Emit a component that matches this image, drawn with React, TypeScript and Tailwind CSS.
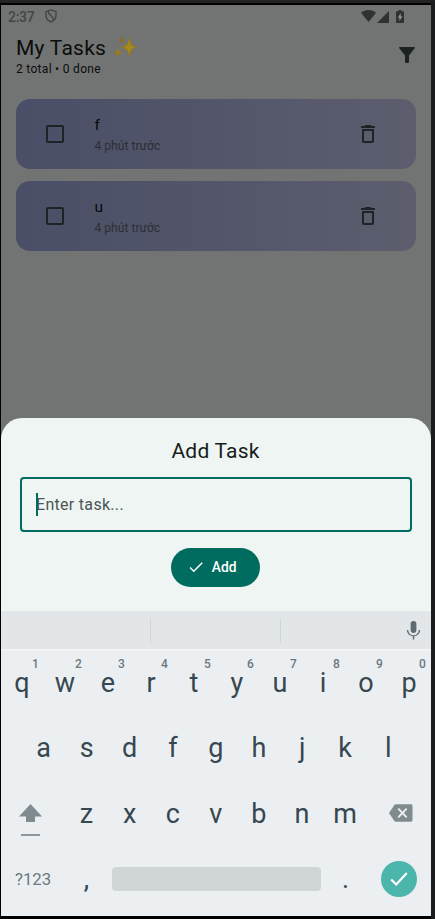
import React from "react";

const TOP_ROW: [string, string][] = [
  ["q", "1"], ["w", "2"], ["e", "3"], ["r", "4"], ["t", "5"],
  ["y", "6"], ["u", "7"], ["i", "8"], ["o", "9"], ["p", "0"],
];
const HOME_ROW = ["a", "s", "d", "f", "g", "h", "j", "k", "l"];
const BOTTOM_ROW = ["z", "x", "c", "v", "b", "n", "m"];

function StatusBar() {
  return (
    <div className="flex h-6 items-center pl-[7px] pr-[27px] text-[#444645]">
      <span className="w-[27px] text-[14px] leading-none font-medium tracking-[-0.3px]">2:37</span>
      <svg className="ml-[10px] mt-[-2px] h-[14px] w-3" viewBox="0 0 12 14" fill="none" stroke="#404241" strokeWidth="1.3">
        <path d="M6 .9 11 2.700v3.900c0 2.900-2.100 5.200-5 6.200-2.900-1-5-3.300-5-6.200V2.700z" />
        <path d="M3.200 2.200c-.2 4.300 5.300 4 5.300 8.800" />
      </svg>
      <div className="ml-auto flex items-center text-[#303231]">
        <svg className="mt-[-2px] h-3 w-[15px]" viewBox="0 0 15 12" fill="currentColor">
          <path d="M7.500 12 0 2.800C2 1 4.600 0 7.500 0S13 1 15 2.800z" />
        </svg>
        <svg className="ml-[1px] mt-[-1px] h-3 w-3" viewBox="0 0 12 12" fill="currentColor">
          <path d="M12 0v12H0z" />
        </svg>
        <svg className="ml-[7px] mt-[-2px] h-[13px] w-[8px]" viewBox="0 0 8 13" fill="currentColor">
          <path d="M2.500 0h3v1.200h1.600q.9 0 .9.900v10q0 .9-.9.900H.9q-.9 0-.9-.9V2.100q0-.9.900-.9h1.600z" />
          <path d="M4.700 3 1.700 7.700h1.700v3.500l3-4.900H4.700z" fill="#8b8e8d" />
        </svg>
      </div>
    </div>
  );
}

function Sparkles() {
  return (
    <svg className="h-6 w-6" viewBox="0 0 24 24">
      <path d="M16.200.8c.8 6.800 2.600 9.800 8 11.400-5.400 1.600-7.200 4.600-8 11.200-.8-6.600-2.600-9.600-8-11.200 5.400-1.600 7.200-4.600 8-11.400z" fill="#98781a" />
      <path d="M16.200 4.500c1 4.700 2.200 6.700 5.500 7.700-3.300 1-4.500 3-5.500 7.500-1-4.500-2.200-6.500-5.500-7.500 3.300-1 4.500-3 5.500-7.700z" fill="#a48a22" />
      <path d="M4.900 12.400c.6 3.200 1.700 4.400 4.600 5.200-2.900.8-4 2-4.600 5.200-.6-3.200-1.700-4.400-4.600-5.200 2.900-.8 4-2 4.600-5.200z" fill="#9c7a1c" />
      <path d="M8.500.9c.5 2.600 1.200 3.600 3.300 4.200-2.100.6-2.800 1.600-3.300 4.200C8 6.700 7.300 5.700 5.200 5.100 7.300 4.500 8 3.500 8.500.9z" fill="#94691c" />
    </svg>
  );
}

function TaskCard({ title }: { title: string }) {
  return (
    <div className="flex h-[70.500px] items-center rounded-[14px] bg-linear-to-r from-[#4a4e67] via-[#53566a] to-[#5c5e6e] pl-[27px] pr-[35px]">
      <svg className="size-6" viewBox="0 0 24 24" fill="#1d2423">
        <path d="M19 5v14H5V5zm0-2H5a2 2 0 0 0-2 2v14a2 2 0 0 0 2 2h14a2 2 0 0 0 2-2V5a2 2 0 0 0-2-2" />
      </svg>
      <div className="ml-[27.500px] flex-1 pt-[3px]">
        <p className="text-[15.500px] leading-[22px] tracking-[0.3px] text-[#060808]">{title}</p>
        <p className="text-[12px] leading-[21px] tracking-[0.050px] text-[#2b2f32]">4 phút trước</p>
      </div>
      <svg className="mr-[0.5px] size-6" viewBox="0 0 24 24" fill="#1d2423">
        <path d="M16 9v10H8V9zm-1.500-6h-5l-1 1H5v2h14V4h-3.500zM18 7H6v12c0 1.100.9 2 2 2h8c1.100 0 2-.9 2-2z" />
      </svg>
    </div>
  );
}

function AddTaskSheet() {
  return (
    <section className="flex h-[193px] flex-col items-center rounded-t-[21px] bg-[#eef5f3] pr-[20px] pl-[19px]">
      <h2 className="mt-[19px] text-[21px] leading-[28px] tracking-[0.200px] text-[#171d1b]">Add Task</h2>
      <div className="mt-[12px] flex h-[55px] w-[391.500px] items-center self-start rounded-[4px] border-2 border-[#006b5f] pl-[14px]">
        <span className="h-[23px] w-[1.500px] bg-[#006b5f]" />
        <span className="-ml-[1.500px] text-[16px] leading-none tracking-[0.3px] text-[#4c5553]">Enter task...</span>
      </div>
      <button className="mt-[15.500px] flex h-[39.500px] w-[89.500px] items-center rounded-full bg-[#006b5f] pl-[16px] text-white">
        <svg className="size-[18px]" viewBox="0 0 24 24" fill="currentColor">
          <path d="M9 16.170 4.830 12l-1.420 1.410L9 19 21 7l-1.410-1.410z" />
        </svg>
        <span className="ml-[7px] pt-px text-[13.800px] leading-none font-medium tracking-[0.100px]">Add</span>
      </button>
    </section>
  );
}

function Key({ label, hint }: { label: string; hint?: string }) {
  return (
    <div className="relative flex h-[65px] w-[43.100px] items-center justify-center pr-px text-[27px] leading-none text-[#37474f]">
      {label}
      {hint && <span className="absolute top-[6px] left-[31px] text-[12px] leading-[14px] font-medium text-[#6c787d]">{hint}</span>}
    </div>
  );
}

function Keyboard() {
  return (
    <section className="bg-[#ebeff2]">
      <div className="flex h-[38px] items-center border-t border-[#e4e8e9] bg-[#e2e6e9]">
        <span className="ml-[149px] h-6 w-px bg-[#cfd4d7]" />
        <span className="ml-[129px] h-6 w-px bg-[#cfd4d7]" />
        <svg className="ml-[121px] size-[23px]" viewBox="0 0 24 24" fill="#5f6c72">
          <rect x="9" y="2" width="6" height="12.500" rx="3" />
          <path d="M17.500 11.500a5.500 5.500 0 0 1-11 0H5a7 7 0 0 0 6.200 6.500v3.500h1.600V18a7 7 0 0 0 6.200-6.500z" />
        </svg>
      </div>
      <div className="h-[2px] bg-[#f1f3f5]" />
      <div className="flex h-[65px]">
        {TOP_ROW.map(([label, hint]) => <Key key={label} label={label} hint={hint} />)}
      </div>
      <div className="flex h-[66px] pl-[21.500px]">
        {HOME_ROW.map((label) => <Key key={label} label={label} />)}
      </div>
      <div className="flex h-[65px]">
        <div className="flex w-[64.500px] flex-col items-start pl-[18px] pt-[22px]">
          <svg className="h-[18px] w-[23px]" viewBox="0 0 23 18" fill="#808b8f">
            <path d="M11.500 0 23 12.500h-7V18H7v-5.500H0z" />
          </svg>
          <span className="mt-[12px] ml-[2px] h-[2px] w-[19px] bg-[#8c969b]" />
        </div>
        {BOTTOM_ROW.map((label) => <Key key={label} label={label} />)}
        <svg className="mt-[22px] ml-[22px] h-[18px] w-[23.500px]" viewBox="0 0 24 18">
          <path d="M7 0h15.500Q24 0 24 1.500v15q0 1.500-1.500 1.500H7q-1 0-1.700-1L0 9l5.300-8Q6 0 7 0z" fill="#808b8f" />
          <path d="m9.500 4.500 8.500 9m0-9-8.500 9" stroke="#ebeff2" strokeWidth="2" />
        </svg>
      </div>
      <div className="flex h-[69px] items-start">
        <span className="mt-[22px] ml-[14px] w-[50px] text-[16.800px] leading-5 text-[#6c797f]">?123</span>
        <span className="mt-[16px] w-[43px] text-center text-[27px] leading-8 text-[#37474f]">,</span>
        <span className="mt-[20px] ml-[4px] h-[23.500px] w-[208.500px] rounded-[4px] bg-[#d0d5d8]" />
        <span className="mt-[16px] ml-[3.500px] w-[43px] text-center text-[27px] leading-8 text-[#37474f]">.</span>
        <span className="mt-[14px] ml-[14px] flex size-[35.500px] items-center justify-center rounded-full bg-[#4db6ac]">
          <svg className="size-[22px]" viewBox="0 0 24 24" fill="none" stroke="#fff" strokeWidth="2.400">
            <path d="m3.500 12.500 5.500 5.500L20.500 5.500" />
          </svg>
        </span>
      </div>
    </section>
  );
}

export default function App() {
  return (
    <div className="h-[919px] w-[435px] overflow-hidden border-t-[3px] border-r-[4px] border-t-[#232323] border-r-[#1b1c1d] bg-black pt-[2px] pl-px font-['Roboto','Noto_Sans',sans-serif]">
      <div className="flex h-[911px] w-[430px] flex-col bg-[#717473]">
        <main className="flex h-[413px] flex-col">
          <StatusBar />
          <header className="flex h-[69.500px] items-start pl-[15px] pr-[12px]">
            <div className="flex-1">
              <div className="mt-[6px] flex h-6 items-center gap-[6.500px]">
                <h1 className="pt-px text-[21px] leading-6 tracking-[0.250px] text-[#0a0d0c]">My Tasks</h1>
                <Sparkles />
              </div>
              <p className="mt-[2px] text-[12px] leading-4 tracking-[0.3px] text-[#0a0d0c]">2 total • 0 done</p>
            </div>
            <svg className="mt-[18px] mr-[4px] h-4 w-4" viewBox="0 0 16 16" fill="#1b2322">
              <path d="M.8 0h14.400q1.200.2.500 1.300L10 8.500V15q0 1-1 1H7q-1 0-1-1V8.500L.3 1.300Q-.4.200.8 0z" />
            </svg>
          </header>
          <div className="flex flex-col gap-[11.500px] pr-[15.500px] pl-[15px]">
            <TaskCard title="f" />
            <TaskCard title="u" />
          </div>
        </main>
        <AddTaskSheet />
        <Keyboard />
      </div>
    </div>
  );
}
